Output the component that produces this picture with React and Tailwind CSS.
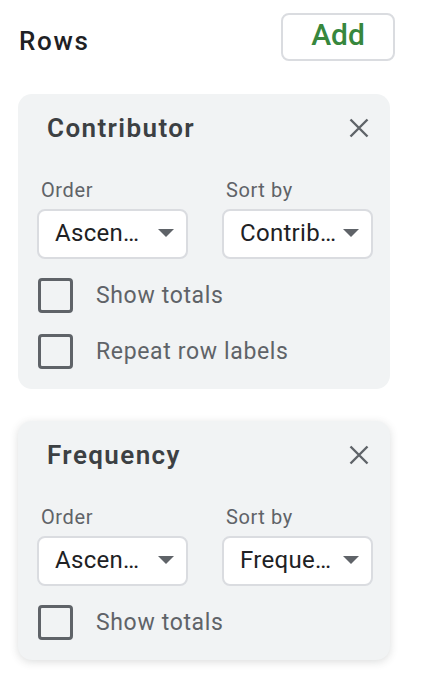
import React from "react";

const font = { fontFamily: "Roboto, 'Liberation Sans', sans-serif" };

const CloseIcon = () => (
  <svg width="20" height="20" viewBox="0 0 20 20" className="text-[#5f6368]">
    <path d="M1.5 1.5 L18.5 18.5 M18.5 1.5 L1.5 18.5" stroke="currentColor" strokeWidth="2.4" fill="none" />
  </svg>
);

const Caret = () => (
  <svg width="16" height="8" viewBox="0 0 16 8" className="shrink-0 text-[#5f6368]">
    <path d="M0 0 L16 0 L8 8 Z" fill="currentColor" />
  </svg>
);

const Dropdown = ({ label, value }) => (
  <div className="flex flex-col">
    <span className="text-[20px] leading-none tracking-[0.6px] text-[#5f6368] pl-[4px]">{label}</span>
    <div className="mt-[9px] h-[50px] w-[151px] flex items-center justify-between pl-[16px] pr-[12px] pb-[2px] bg-white border-2 border-[#dadce0] rounded-[8px]">
      <span className="text-[24px] leading-none tracking-[0.3px] text-[#202124] whitespace-nowrap">{value}</span>
      <Caret />
    </div>
  </div>
);

const Checkbox = ({ label }) => (
  <div className="flex items-center">
    <div className="ml-[1px] w-[35px] h-[35px] border-[3px] border-[#5f6368] rounded-[4px]" />
    <span className="ml-[23px] text-[23px] leading-none tracking-[0.65px] text-[#5f6368]">{label}</span>
  </div>
);

const FieldCard = ({ title, sortBy, options, raised }) => (
  <div
    className={`w-[372px] bg-[#f1f3f4] rounded-[14px] pl-[19px] pr-[18px] pt-[21px] pb-[20px] ${
      raised ? "shadow-[0_2px_8px_rgba(60,64,67,0.18)]" : ""
    }`}
  >
    <div className="flex items-center justify-between">
      <span className="pl-[10px] text-[26px] leading-none font-semibold tracking-[1.4px] text-[#3c4043]">{title}</span>
      <span className="mr-[3px]">
        <CloseIcon />
      </span>
    </div>
    <div className="mt-[39px] flex gap-[34px]">
      <Dropdown label="Order" value="Ascen…" />
      <Dropdown label="Sort by" value={sortBy} />
    </div>
    <div className="mt-[19px] flex flex-col gap-[21px]">
      {options.map((o) => (
        <Checkbox key={o} label={o} />
      ))}
    </div>
  </div>
);

export default function App() {
  return (
    <div className="min-h-screen bg-white px-[18px] pt-[13px]" style={font}>
      <div className="w-[377px] flex justify-between items-start">
        <span className="mt-[15px] pl-[1px] text-[26px] leading-none font-medium tracking-[1.7px] text-[#202124]">Rows</span>
        <button className="w-[114px] h-[48px] flex items-center justify-center pb-[4px] border-2 border-[#dadce0] rounded-[8px] bg-white text-[30px] leading-none font-medium text-[#37873d]">
          Add
        </button>
      </div>
      <div className="mt-[33px] flex flex-col gap-[32px]">
        <FieldCard title="Contributor" sortBy="Contrib…" options={["Show totals", "Repeat row labels"]} />
        <FieldCard title="Frequency" sortBy="Freque…" options={["Show totals"]} raised />
      </div>
    </div>
  );
}
